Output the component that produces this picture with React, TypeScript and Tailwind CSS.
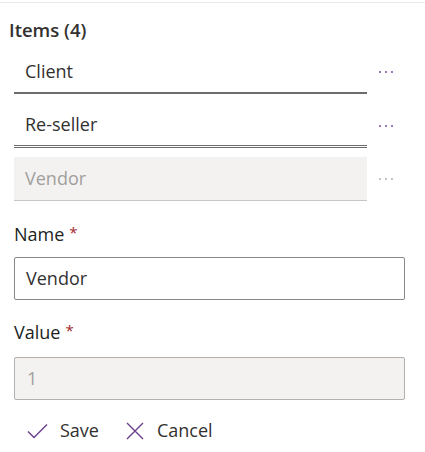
import React from 'react'

const font = { fontFamily: '"Open Sans", "Noto Sans", sans-serif' }

function Dots({ disabled }: { disabled?: boolean }) {
  return (
    <button className={`ml-[6px] flex h-[44px] w-[26px] items-center justify-center ${disabled ? 'text-[#b3b0ad]' : 'text-[#7a4b9e]'}`}>
      <svg width="16" height="4" viewBox="0 0 16 4" fill="currentColor">
        <circle cx="2" cy="2" r="1" />
        <circle cx="8" cy="2" r="1" />
        <circle cx="14" cy="2" r="1" />
      </svg>
    </button>
  )
}

function ItemRow({ label, variant }: { label: string; variant: 'underline' | 'double' | 'disabled' }) {
  const fieldCls =
    variant === 'underline'
      ? 'border-b-2 border-[#6e6c6a] bg-white text-[#323130]'
      : variant === 'double'
        ? 'border-b-[3px] border-double border-[#6e6c6a] bg-white text-[#323130]'
        : 'border-b border-[#c8c6c4] bg-[#f3f2f1] text-[#a19f9d]'
  return (
    <div className="flex items-center">
      <div className={`flex h-[44px] w-[353px] items-center pl-[11px] text-[18px] ${fieldCls}`}>{label}</div>
      <Dots disabled={variant === 'disabled'} />
    </div>
  )
}

function Label({ text }: { text: string }) {
  return (
    <div className="flex items-start text-[18px] leading-[24px] text-[#201f1e]">
      {text}
      <span className="ml-[5px] text-[15px] leading-[20px] text-[#a4262c]">*</span>
    </div>
  )
}

export default function App() {
  return (
    <div className="h-[452px] w-[425px] bg-white" style={font}>
      <div className="pt-[2px]">
        <div className="h-px w-full bg-[#edebe9]" />
      </div>
      <div className="pl-[9px] pt-[16px] text-[18.5px] font-semibold leading-[22px] text-[#323130]">Items (4)</div>

      <div className="flex flex-col gap-[9.5px] pl-[14px] pt-[9px]">
        <ItemRow label="Client" variant="underline" />
        <ItemRow label="Re-seller" variant="double" />
        <ItemRow label="Vendor" variant="disabled" />
      </div>

      <div className="pl-[14px] pr-[20px]">
        <div className="pt-[21px]">
          <Label text="Name" />
        </div>
        <div className="mt-[11px] flex h-[43px] items-center rounded-[2px] border border-[#8a8886] bg-white pl-[11px] text-[18px] text-[#323130]">
          Vendor
        </div>

        <div className="pt-[20px]">
          <Label text="Value" />
        </div>
        <div className="mt-[13px] flex h-[43px] items-center rounded-[2px] border border-[#b3b0ad] bg-[#f3f2f1] pl-[12px] text-[18px] text-[#a19f9d]">
          1
        </div>

        <div className="mt-[17px] flex items-center text-[18px] text-[#323130]">
          <button className="flex items-center pl-[13px]">
            <svg width="21" height="16" viewBox="0 0 21 16" fill="none" stroke="#6b3f8c" strokeWidth="1.4">
              <path d="M1 8.5 L7 14.5 L20 1.5" />
            </svg>
            <span className="ml-[12px]">Save</span>
          </button>
          <button className="ml-[27px] flex items-center">
            <svg width="18" height="18" viewBox="0 0 18 18" fill="none" stroke="#6b3f8c" strokeWidth="1.4">
              <path d="M1 1 L17 17 M17 1 L1 17" />
            </svg>
            <span className="ml-[13px]">Cancel</span>
          </button>
        </div>
      </div>
    </div>
  )
}
